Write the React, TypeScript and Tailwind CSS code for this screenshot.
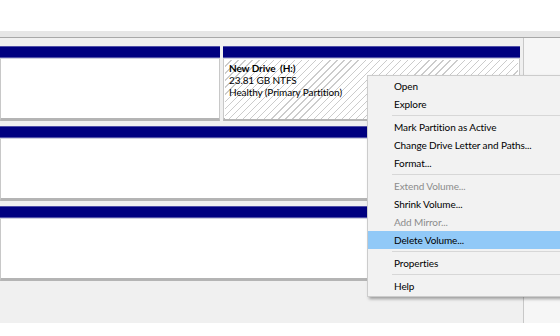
const ITEMS: Array<{ label: string; disabled?: boolean; active?: boolean } | 'sep'> = [
  { label: 'Open' },
  { label: 'Explore' },
  'sep',
  { label: 'Mark Partition as Active' },
  { label: 'Change Drive Letter and Paths...' },
  { label: 'Format...' },
  'sep',
  { label: 'Extend Volume...', disabled: true },
  { label: 'Shrink Volume...' },
  { label: 'Add Mirror...', disabled: true },
  { label: 'Delete Volume...', active: true },
  'sep',
  { label: 'Properties' },
  'sep',
  { label: 'Help' },
];

const hatch =
  'bg-[repeating-linear-gradient(135deg,#ffffff_0px,#ffffff_4px,#cccccc_4px,#cccccc_5px)]';

function BlueBar() {
  return <div className="h-[12px] bg-[#000080] border-y border-[#5050a8]" />;
}

function Partition({ className = '', children }: { className?: string; children?: React.ReactNode }) {
  return (
    <div className={`flex flex-col ${className}`}>
      <BlueBar />
      <div className="h-[63px] border-t border-[#d0d0e0] border-x border-x-[#c8c8c8] border-b-[3px] border-b-[#b4b4b4] bg-white">
        {children}
      </div>
    </div>
  );
}

function ContextMenu() {
  return (
    <div className="absolute left-[367px] top-[75px] w-[210px] border border-[#cccccc] bg-[#f2f2f2] py-px shadow-[2px_2px_3px_rgba(0,0,0,0.35)]">
      {ITEMS.map((item, i) =>
        item === 'sep' ? (
          <div key={i} className="h-[5px] flex items-center pl-[24px]">
            <div className="h-px w-full bg-[#d7d7d7]" />
          </div>
        ) : (
          <div
            key={i}
            className={`h-[18px] pl-[26px] leading-[18px] text-[10px] tracking-[-0.1px] whitespace-nowrap ${
              item.active ? 'bg-[#91c9f7]' : ''
            } ${item.disabled ? 'text-[#8c8c8c]' : 'text-black'}`}
          >
            {item.label}
          </div>
        ),
      )}
    </div>
  );
}

export default function App() {
  return (
    <div className="relative w-[560px] h-[336px] overflow-hidden bg-white font-['Lato','Liberation_Sans',sans-serif]">
      <div className="h-[31px] bg-white" />
      <div className="h-[7px] bg-[#e6e6e6] border-b border-[#a8a8a8]" />
      <div className="h-[285px] bg-[#f0f0f0] flex">
        <div className="w-[520px] pt-[8px] flex flex-col gap-[5px]">
          <div className="flex gap-[3px]">
            <Partition className="w-[220px]" />
            <Partition className="flex-1">
              <div className={`h-full m-px ${hatch} px-[4px] pt-[2px] text-[10px] tracking-[-0.1px] leading-[12px] text-black`}>
                <div className="font-bold">New Drive&nbsp; (H:)</div>
                <div>23.81 GB NTFS</div>
                <div>Healthy (Primary Partition)</div>
              </div>
            </Partition>
          </div>
          <Partition />
          <Partition />
        </div>
        <div className="ml-[3px] w-px bg-[#c8c8c8]" />
        <div className="flex-1 bg-[#f6f6f6]" />
      </div>
      <div className="h-[13px] bg-white" />
      <ContextMenu />
    </div>
  );
}
